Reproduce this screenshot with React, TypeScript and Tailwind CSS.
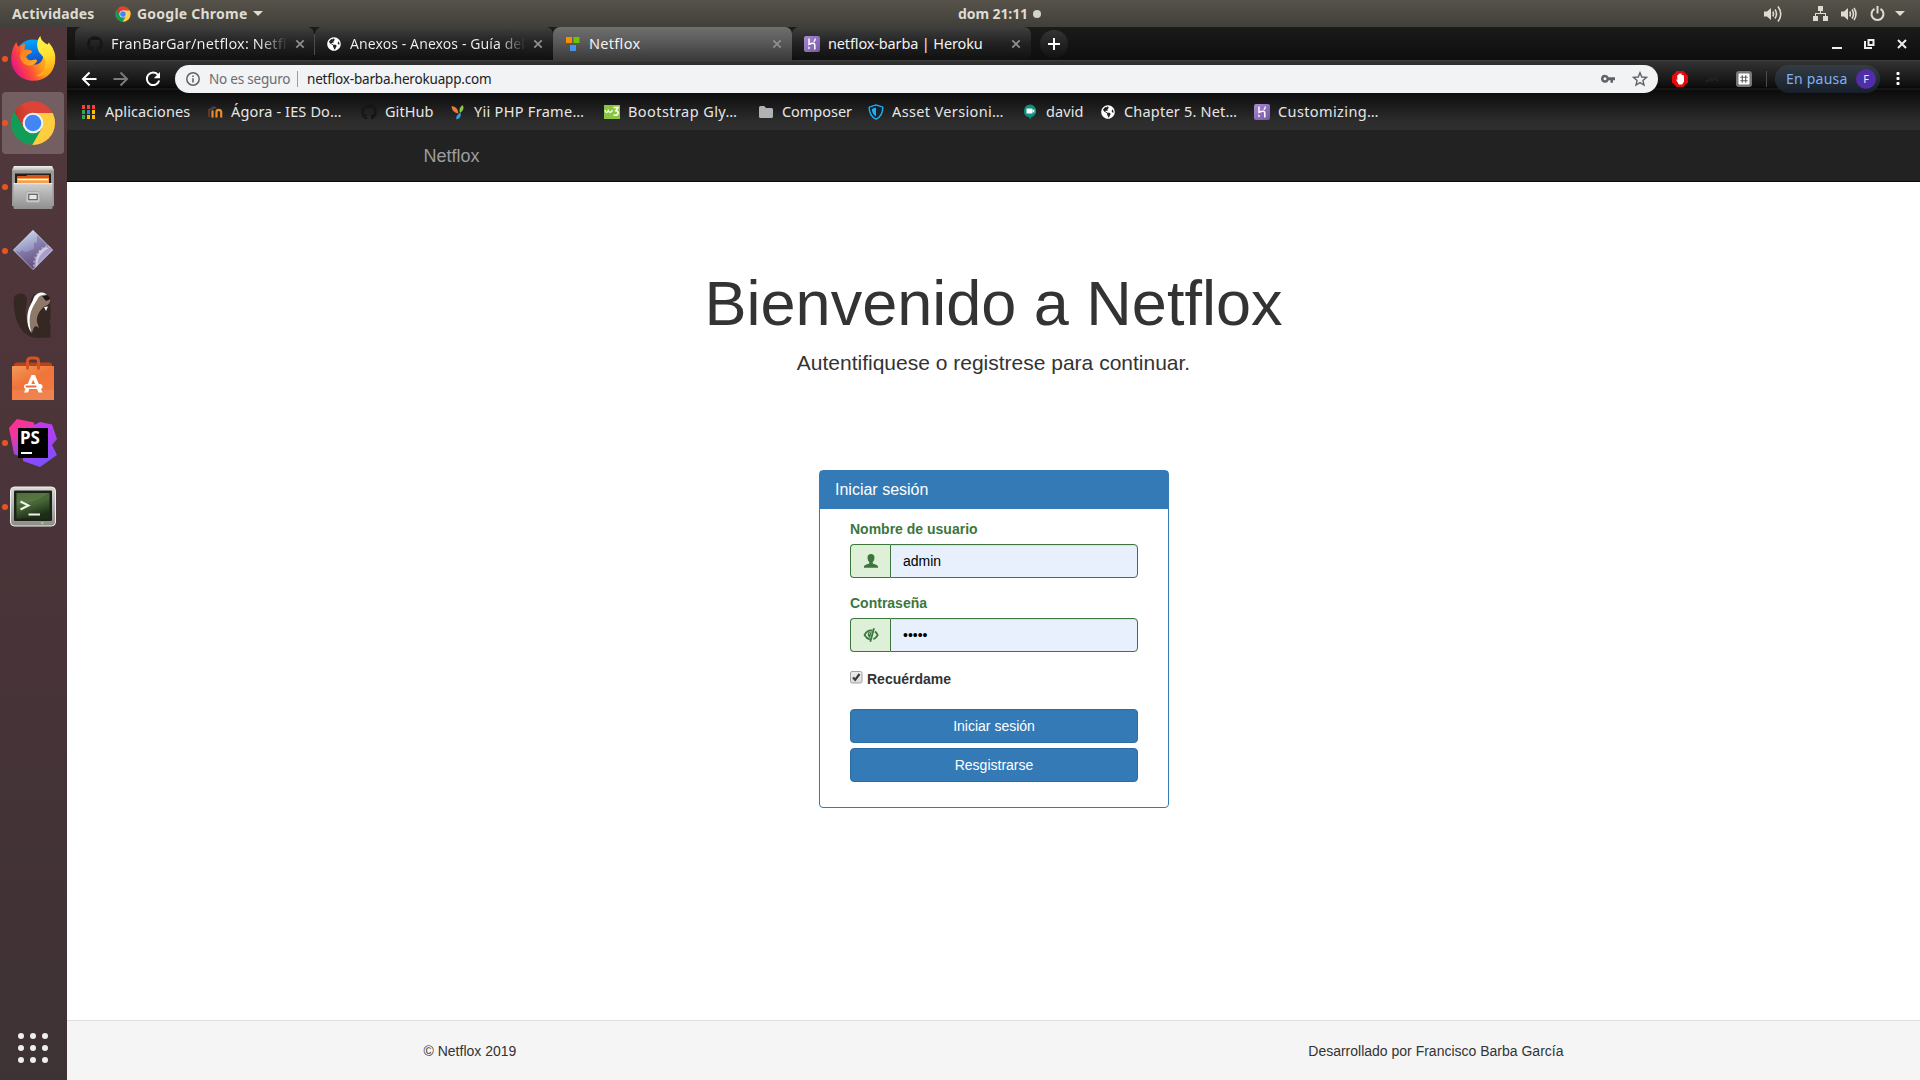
import React from "react";
import { FaGithub, FaGlobeAmericas } from "react-icons/fa";

const UI = "font-['Noto_Sans',sans-serif]";

function ChromeLogo({ size, id }: { size: number; id: string }) {
  return (
    <svg width={size} height={size} viewBox="0 0 48 48">
      <defs>
        <clipPath id={id}><circle cx="24" cy="24" r="23" /></clipPath>
        <linearGradient id={id + "s"} x1="0" y1="0" x2="1" y2="0">
          <stop offset="0" stopColor="#a52714" stopOpacity=".6" />
          <stop offset="1" stopColor="#db4437" stopOpacity="0" />
        </linearGradient>
      </defs>
      <g clipPath={`url(#${id})`}>
        <rect width="48" height="48" fill="#db4437" />
        <path d="M-2 6 L4.5 12 L15 29.5 L24 34.5 L33 29.5 L22 50 H-4 Z" fill="#0f9d58" />
        <path d="M24 13.5 H50 V50 H21.5 L33.5 29 L24 24 Z" fill="#ffcd40" />
        <path d="M4.5 12 L14 29 L14 20 Q17 14 24 13.5 L10 5Z" fill={`url(#${id}s)`} />
      </g>
      <circle cx="24" cy="24" r="10.8" fill="#f1f1f1" />
      <circle cx="24" cy="24" r="8.6" fill="#4285f4" />
    </svg>
  );
}

function Firefox() {
  return (
    <svg width="48" height="48" viewBox="0 0 48 48">
      <defs>
        <linearGradient id="ffBlue" x1=".4" y1="0" x2=".6" y2=".9">
          <stop offset="0" stopColor="#00a8f8" /><stop offset=".45" stopColor="#0a6fe6" /><stop offset="1" stopColor="#2a2a96" />
        </linearGradient>
        <linearGradient id="ffBody" x1=".9" y1=".2" x2=".05" y2=".6">
          <stop offset="0" stopColor="#ffcf2a" /><stop offset=".4" stopColor="#ff9a1c" /><stop offset=".7" stopColor="#ff4f35" /><stop offset="1" stopColor="#ea1a7c" />
        </linearGradient>
        <linearGradient id="ffTail" x1=".4" y1="0" x2=".6" y2="1">
          <stop offset="0" stopColor="#fff64f" /><stop offset=".5" stopColor="#ffe02e" /><stop offset="1" stopColor="#ff9a12" />
        </linearGradient>
        <linearGradient id="ffFace" x1="0" y1="0" x2="1" y2="1">
          <stop offset="0" stopColor="#ff6a20" /><stop offset="1" stopColor="#ffb31a" />
        </linearGradient>
      </defs>
      <circle cx="24" cy="22.500" r="18" fill="url(#ffBlue)" />
      <path d="M7.500 7 C7.600 9 8.600 11 10 12 C12 10 14 9 16 9 L15.500 15 C20 14.500 22 15 23 17 C21 19 17.500 19.500 17 22 C18 27 22 30 27 29.500 C31 29 35 25 34 19 L41 14 C45.500 17 46.800 22 45.800 28 C44 39 35 45.800 25 45.800 C13 45.800 3 38 2.200 25 C2 19 4 11 7.500 7 Z" fill="url(#ffBody)" />
      <path d="M31.500 1 C31.500 5 35 7.500 38.500 9.500 L40 7.500 C41 10 44 12 44.500 15 C47.500 21 46.500 29 43 34.500 C39 40 32 42 27 41 C34 38 37 33 36.500 27 C36.500 23 32 20 30 17 C27 11 28 4 31.500 1 Z" fill="url(#ffTail)" />
      <path d="M16 9 C13 12 14 14.500 15.500 15 C20 14.500 22 15 23 17 C21 19 17.500 19.500 17 22 C20 27 23 25 25.500 24.500 C28 24.500 29 26 27.500 27 C24 32 17 31 14 28 C9 22 10 14 16 9Z" fill="url(#ffFace)" />
    </svg>
  );
}

function Files() {
  return (
    <svg className="mt-[2px]" width="48" height="48" viewBox="0 0 48 48">
      <defs>
        <linearGradient id="fiG" x1="0" y1="0" x2="0" y2="1"><stop offset="0" stopColor="#cfcfcf" /><stop offset="1" stopColor="#8f8f8f" /></linearGradient>
        <linearGradient id="fiT" x1="0" y1="0" x2="0" y2="1"><stop offset="0" stopColor="#f2f2f2" /><stop offset="1" stopColor="#b5b5b5" /></linearGradient>
      </defs>
      <path d="M5 2 H43 L45 6 V42 H3 V6 Z" fill="#9a9a9a" />
      <path d="M5 2 H43 L45 6.500 H3 Z" fill="url(#fiT)" />
      <rect x="6" y="9.500" width="36" height="10" fill="#231f1d" />
      <path d="M8 12 H17 L18.500 11 H40 V19 H8Z" fill="#d5541c" />
      <rect x="8" y="14" width="32" height="5" fill="#f6a04c" />
      <rect x="9" y="15" width="30" height="1.200" fill="#fff" />
      <rect x="4.500" y="19" width="39" height="26" rx="1" fill="url(#fiG)" />
      <rect x="4.500" y="19" width="39" height="1.200" fill="#e8e8e8" />
      <rect x="17" y="27.500" width="14" height="11" rx="2" fill="#c9c9c9" stroke="#aaa" />
      <rect x="19.800" y="30.300" width="8.400" height="5.400" fill="#e6e6e6" stroke="#4f4f4f" />
    </svg>
  );
}

function Diamond() {
  return (
    <svg className="mb-[2px]" width="42" height="42" viewBox="0 0 42 42">
      <defs>
        <linearGradient id="diA" x1=".2" y1="0" x2=".6" y2="1"><stop offset="0" stopColor="#d4def0" /><stop offset=".45" stopColor="#9a9ac4" /><stop offset="1" stopColor="#64436f" /></linearGradient>
        <clipPath id="diC"><path d="M21 1 L41 21 L21 41 L1 21Z" /></clipPath>
      </defs>
      <path d="M21 1 L41 21 L21 41 L1 21Z" fill="url(#diA)" />
      <g clipPath="url(#diC)">
        <circle cx="43" cy="36" r="20" fill="#a99cc8" />
        <circle cx="43" cy="36" r="19" fill="none" stroke="#cfc9e2" strokeWidth="3" />
        <circle cx="43" cy="36" r="21" fill="none" stroke="#cfc9e2" strokeWidth="2" strokeDasharray="2 2" />
        <path d="M3 22 L8 23 L10 21 L13 23 L17 22 L22 20 L22 14 L25 13 L25 6 L41 21 L33 18 L27 22 L24 30 L24 39 L20 40Z" fill="#5d4a80" opacity=".35" />
      </g>
      <path d="M21 1.500 L40.500 21 L21 40.500 L1.500 21Z" fill="none" stroke="#d9def0" strokeOpacity=".5" />
    </svg>
  );
}

function Beaver() {
  return (
    <svg width="48" height="48" viewBox="0 0 48 48">
      <path d="M5 6 C8 1 17 1 18 8 C18 15 15 20 18 30 L40 28 C42 34 42 38 41 43 C42 44 42 46 41 46.500 L28 47 C18 47 10 38 7 27 C5 20 4 12 5 6Z" fill="#352722" />
      <path d="M22 12 C21 7 25 2 32 1.500 C37 1.500 42 5 41.500 10 C41 14 42 20 41.500 28 L36 34 L22 44 C17 34 18 22 22 12Z" fill="#352722" />
      <path d="M24 9 C27 5 31 3 35 4 L41 7 C42 11 40 14 36 15 C32 18 27 24 28 31 L30 37 C27 34 25 34 23 42 C18 34 19 22 22 16 Z" fill="#8d7869" />
      <path d="M24 9 C25 4 29 1.500 33 1.500 C35 1.500 37 2.500 38 4 C34 3.500 31 4 29 7 C28 10 25 13 23 18 C20 25 20 33 22.500 42 C16 33 18 20 21.500 14Z" fill="#fff" />
      <path d="M33 5 L39 5 L41.500 8 L37 10 Z" fill="#1d1512" />
      <path d="M35 16 L39 15.500 L37 20Z" fill="#fff" />
    </svg>
  );
}

function Software() {
  return (
    <svg width="48" height="48" viewBox="0 0 48 48">
      <defs><linearGradient id="soG" x1="0" y1="0" x2=".6" y2="1"><stop offset="0" stopColor="#f09a5c" /><stop offset=".5" stopColor="#f07439" /><stop offset="1" stopColor="#ee7b43" /></linearGradient></defs>
      <path d="M5 9 L7 7.500 H41 L43 9 V13 H5Z" fill="#b8431a" />
      <rect x="3" y="11" width="42" height="34" rx=".5" fill="url(#soG)" />
      <rect x="3" y="35" width="42" height="10" fill="#fff" opacity=".07" />
      <path d="M18.500 14.500 V6.500 Q18.500 3 22 3 H26 Q29.500 3 29.500 6.500 V14.500" fill="none" stroke="#d9531f" strokeWidth="3" />
      <path d="M22.500 20 H26 L33.500 37.500 H29.500 L24.200 24.500 L19 37.500 H15Z" fill="#fff" />
      <rect x="15" y="29" width="18.500" height="5" rx="2.500" fill="#fff" />
      <rect x="16.500" y="30.500" width="11" height="2" rx="1" fill="#ee7038" />
    </svg>
  );
}

function PhpStorm() {
  return (
    <div className="relative h-12 w-12">
      <svg width="48" height="48" viewBox="0 0 48 48">
        <defs>
          <linearGradient id="psA" x1="0" y1="0" x2=".5" y2="1"><stop offset="0" stopColor="#ff318c" /><stop offset=".4" stopColor="#f3359f" /><stop offset="1" stopColor="#8a4cf2" /></linearGradient>
          <linearGradient id="psB" x1=".5" y1="0" x2=".8" y2="1"><stop offset="0" stopColor="#c23af0" /><stop offset=".6" stopColor="#9a45f8" /><stop offset="1" stopColor="#6b57ff" /></linearGradient>
        </defs>
        <path d="M0 9 L8 0 L25 3.500 L28 22 L10 37 L5 35 Z" fill="url(#psA)" />
        <path d="M25 6 L31 3 L43 5.500 L48 20 L43 26 L48 36 L31 48 L14 42 L14 30 Z" fill="url(#psB)" />
        <rect x="9" y="9" width="30" height="30" fill="#000" />
        <rect x="12" y="33" width="11" height="2" fill="#fff" />
      </svg>
      <span className="absolute left-[11px] top-[9px] font-['Noto_Sans',sans-serif] text-[17px] font-bold leading-[20px] text-white">PS</span>
    </div>
  );
}

function Terminal() {
  return (
    <svg width="48" height="48" viewBox="0 0 48 48">
      <defs>
        <linearGradient id="teF" x1="0" y1="0" x2="0" y2="1"><stop offset="0" stopColor="#d8d8d4" /><stop offset="1" stopColor="#8d8d88" /></linearGradient>
        <linearGradient id="teS" x1="0" y1="0" x2=".4" y2="1"><stop offset="0" stopColor="#3b5a2c" /><stop offset=".5" stopColor="#4a6a38" /><stop offset="1" stopColor="#1c2e17" /></linearGradient>
      </defs>
      <rect x="1.500" y="4" width="45" height="39" rx="4" fill="url(#teF)" stroke="#efefef" />
      <rect x="5" y="7.500" width="38" height="30.500" rx="1" fill="#1c2218" />
      <rect x="7.500" y="10" width="33" height="25.500" fill="url(#teS)" />
      <path d="M7.500 22 Q25 20 40.500 10 V10 H7.500Z" fill="#7f9a60" opacity=".3" />
      <path d="M11.500 18.500 L19.500 22.500 L11.500 26.500" fill="none" stroke="#f0f5ea" strokeWidth="2" />
      <rect x="19.500" y="30.500" width="11.500" height="2" fill="#f0f5ea" />
      <rect x="32" y="39.300" width="2.500" height="1.800" fill="#8fe04a" />
    </svg>
  );
}

function Heroku({ id }: { id: string }) {
  return (
    <svg width="16" height="16" viewBox="0 0 16 16">
      <defs><linearGradient id={id} x1="0" y1="0" x2="1" y2="1"><stop offset="0" stopColor="#a98bd0" /><stop offset="1" stopColor="#7556a5" /></linearGradient></defs>
      <rect width="16" height="16" rx="2" fill={`url(#${id})`} />
      <path d="M5 2.500 V8.300 Q10.800 6 10.800 9 V13.500" fill="none" stroke="#fff" strokeWidth="1.500" />
      <path d="M4.300 10.200 L6.300 11.900 L4.300 13.600Z" fill="#fff" />
      <path d="M11.400 2.500 Q11.200 4.300 9.800 5.700" fill="none" stroke="#fff" strokeWidth="1.400" />
    </svg>
  );
}

const Globe = () => <div className="flex h-4 w-4 items-center justify-center"><FaGlobeAmericas size={14} color="#fff" /></div>;

const icons: Record<string, React.ReactNode> = {
  apps: (
    <svg width="16" height="16" viewBox="0 0 16 16">
      {["#f44336", "#f44336", "#f44336", "#34a853", "#1e88e5", "#fbbc05", "#34a853", "#fbbc05", "#fbbc05"].map((c, i) => (
        <rect key={i} x={1 + (i % 3) * 5} y={1 + Math.floor(i / 3) * 5} width="3" height="4" fill={c} />
      ))}
    </svg>
  ),
  moodle: (
    <svg width="16" height="16" viewBox="0 0 16 16">
      <path d="M0 6 L7 2 L10 4 L3 6.500Z" fill="#4b4140" />
      <path d="M5.500 13.500 V6.500 M9.500 13.500 V8 Q9.500 5.800 11.800 5.800 Q14.200 5.800 14.200 8.500 V13.500" fill="none" stroke="#ee8a2c" strokeWidth="2.200" />
      <path d="M2 5.500 V13" stroke="#7b4a2a" strokeWidth="1.200" />
    </svg>
  ),
  github: <FaGithub size={16} color="#161616" />,
  yii: (
    <svg width="16" height="16" viewBox="0 0 16 16">
      <path d="M1.500 2 Q8 2.500 8.500 9.500 Q2 9 1.500 2Z" fill="#f07a34" />
      <path d="M12.500 1 Q15.500 5 10 9 Q8.300 4 12.500 1Z" fill="#8ec641" />
      <path d="M10.500 8.500 Q12 14 6.500 15.500 Q5 12 10.500 8.500Z" fill="#3d9bd9" />
    </svg>
  ),
  w3: (
    <svg width="16" height="16" viewBox="0 0 16 16">
      <rect y="1" width="16" height="14" fill="#8bc53f" />
      <path d="M1 6 L1.500 7.500 Q3.200 9.500 4.200 6.500 Q5.500 9.500 7.500 7.500 L8.500 6" fill="none" stroke="#fff" strokeWidth="1.200" />
      <path d="M9.500 3.500 H14 L11.800 6.800 Q14.600 7 14 9.500 Q13 12.300 9.600 10.700" fill="none" stroke="#fff" strokeWidth="1.600" />
    </svg>
  ),
  folder: <svg width="16" height="16" viewBox="0 0 16 16"><path d="M1 3.500 Q1 2 2.500 2 H6.200 L8 4 H13.500 Q15 4 15 5.500 V12.500 Q15 14 13.500 14 H2.500 Q1 14 1 12.500Z" fill="#b0b2b5" /></svg>,
  shield: (
    <svg width="16" height="16" viewBox="0 0 16 16">
      <path d="M8 .9 L14.800 3.200 Q15 11.500 8 15.200 Q1 11.500 1.200 3.200Z" fill="#17222c" stroke="#1fb0f8" strokeWidth="1.400" />
      <path d="M8 3.500 V12.500 Q3.800 9.500 3.800 5Z" fill="#1fb0f8" />
    </svg>
  ),
  hangouts: (
    <svg width="16" height="16" viewBox="0 0 16 16">
      <path d="M8.200 .6 A6.400 6.400 0 0 1 8.900 13.300 V15.600 L6.500 13.100 A6.400 6.400 0 0 1 8.200 .6Z" fill="#0f8f7e" />
      <rect x="4.500" y="4.600" width="6" height="5" rx=".6" fill="#fff" /><path d="M10 7.100 L12.300 5.100 V9.100Z" fill="#fff" />
    </svg>
  ),
  globe: <Globe />,
  heroku: <Heroku id="heBar" />,
};

const bookmarks = [
  { icon: "apps", t: "Aplicaciones", w: "w-[126px]", c: "tracking-[0.08px]" },
  { icon: "moodle", t: "Ágora - IES Do…", w: "w-[154px]", c: "tracking-[0.14px]" },
  { icon: "github", t: "GitHub", w: "w-[89px]", c: "tracking-[0.05px]" },
  { icon: "yii", t: "Yii PHP Frame…", w: "w-[154px]", c: "tracking-[0.29px]" },
  { icon: "w3", t: "Bootstrap Gly…", w: "w-[154px]", c: "tracking-[0.43px]" },
  { icon: "folder", t: "Composer", w: "w-[110px]", c: "tracking-[-0.04px]" },
  { icon: "shield", t: "Asset Versioni…", w: "w-[154px]", c: "tracking-[0.36px]" },
  { icon: "hangouts", t: "david", w: "w-[78px]", c: "tracking-[0.08px]" },
  { icon: "globe", t: "Chapter 5. Net…", w: "w-[154px]", c: "tracking-[0.2px]" },
  { icon: "heroku", t: "Customizing…", w: "w-[154px]", c: "tracking-[0.39px]" },
];

function CloseX() {
  return <svg width="10" height="10" viewBox="0 0 10 10" className="shrink-0"><path d="M1.300 1.300 L8.700 8.700 M8.700 1.300 L1.300 8.700" stroke="#8f8f8f" strokeWidth="1.700" /></svg>;
}

function Volume({ wide }: { wide?: boolean }) {
  return (
    <svg width="18" height="18" viewBox="0 0 18 18" fill="none" stroke="#dfdbd2" strokeWidth="1.600">
      <path d="M0 6.500 H3 L7 3 V15 L3 11.500 H0Z" fill="#dfdbd2" stroke="none" />
      <path d="M8.800 6.500 Q10.300 9 8.800 11.500" />
      <path d="M11 4.500 Q14 9 11 13.500" />
      <path d={wide ? "M14 1.500 Q19.500 9 14 16.500" : "M13 3 Q17 9 13 15"} />
    </svg>
  );
}

function Tri() {
  return <svg width="10" height="6" viewBox="0 0 10 6"><path d="M0 0 H10 L5 5Z" fill="#dfdbd2" /></svg>;
}

function TopBar() {
  return (
    <div className={`flex h-[27px] shrink-0 items-center bg-gradient-to-b from-[#57534b] to-[#403f39] text-[14px] font-bold leading-[26px] text-[#dfdbd2] ${UI}`}>
      <span className="ml-[12px] w-[103px] whitespace-pre tracking-[0.15px]">Actividades</span>
      <ChromeLogo size={16} id="ctop" />
      <span className="ml-[6px] w-[116px] whitespace-pre tracking-[0.23px]">Google Chrome</span>
      <Tri />
      <span className="ml-[695px] w-[75px] whitespace-pre tracking-[-0.1px]">dom 21:11</span>
      <span className="h-2 w-2 rounded-full bg-[#d6d3cc]" />
      <div className="ml-[723px]"><Volume wide /></div>
      <svg className="ml-[31px]" width="15" height="16" viewBox="0 0 15 16" fill="#dfdbd2">
        <rect x="5" y="0" width="5" height="5" /><rect x="0" y="10" width="5" height="5" /><rect x="10" y="10" width="5" height="5" />
        <path d="M7 5 H8 V7 H13 V10 H12 V8 H3 V10 H2 V7 H7Z" />
      </svg>
      <div className="ml-[13px]"><Volume /></div>
      <svg className="ml-[11px]" width="15" height="16" viewBox="0 0 15 16" fill="none" stroke="#dfdbd2" strokeWidth="2">
        <path d="M4.500 2.800 A6 6 0 1 0 10.500 2.800" /><path d="M7.500 0 V7.500" />
      </svg>
      <div className="ml-[10px]"><Tri /></div>
    </div>
  );
}

const tabBg = "bg-gradient-to-b from-[#3f3f3f] via-[#222222] to-[#101010]";

function Chrome() {
  return (
    <div className={`shrink-0 ${UI}`}>
      <div className="flex h-[33px] items-start bg-gradient-to-b from-[#1b1b1b] to-[#0e0e0e] pl-[8px] text-[14.5px] leading-[22px] text-[#f2f2f2]">
        <div className={`flex h-[33px] w-[239px] items-center rounded-t-[7px] rounded-b-[5px] pl-[12px] pr-[10px] ${tabBg}`}>
          <FaGithub className="shrink-0" size={16} color="#161616" />
          <span className="ml-[8px] w-[184px] shrink-0 pb-px"><span className="whitespace-pre bg-gradient-to-r from-[#f2f2f2] from-85% to-[#2c2c2c] bg-clip-text tracking-[0.15px] text-transparent">FranBarGar/netflox: Netfl</span></span>
          <CloseX />
        </div>
        <div className="mt-[7px] h-[21px] w-px bg-[#4c4c4c]" />
        <div className={`flex h-[33px] w-[238px] items-center rounded-t-[7px] rounded-b-[5px] pl-[11px] pr-[10px] ${tabBg}`}>
          <Globe />
          <span className="ml-[8px] w-[183px] shrink-0 pb-px"><span className="whitespace-pre bg-gradient-to-r from-[#f2f2f2] from-85% to-[#2c2c2c] bg-clip-text text-[14px] tracking-[0.09px] text-transparent">Anexos - Anexos - Guía del</span></span>
          <CloseX />
        </div>
        <div className="flex h-[33px] w-[239px] items-center rounded-t-[7px] bg-gradient-to-b from-[#6f6f6f] from-0% via-[#575757] via-50% to-[#3a3a3a] to-100% pl-[12px] pr-[10px]">
          <svg width="16" height="16" viewBox="0 0 16 16"><rect x="1" y="1" width="6" height="6" fill="#ff8b00" /><rect x="8.500" y="1" width="6" height="6" fill="#6cc404" /><rect x="5" y="9" width="6" height="6" fill="#4693ee" /></svg>
          <span className="ml-[8px] grow whitespace-pre pb-px tracking-[0.3px]">Netflox</span>
          <CloseX />
        </div>
        <div className={`flex h-[33px] w-[239px] items-center rounded-t-[7px] rounded-b-[5px] pl-[12px] pr-[10px] ${tabBg}`}>
          <Heroku id="heTab" />
          <span className="ml-[8px] grow whitespace-pre pb-px tracking-[-0.14px]">netflox-barba | Heroku</span>
          <CloseX />
        </div>
        <div className="ml-[9px] mt-[3px] flex h-[28px] w-[28px] items-center justify-center rounded-full bg-gradient-to-b from-[#343434] to-[#121212]">
          <svg width="12" height="12" viewBox="0 0 12 12"><path d="M6 0 V12 M0 6 H12" stroke="#fff" strokeWidth="2" /></svg>
        </div>
        <div className="ml-auto mr-[12px] flex h-[33px] items-center">
          <svg width="76" height="12" viewBox="0 0 76 12">
            <rect x="0" y="9" width="10" height="2" fill="#eee" />
            <path d="M35.500 1 H42.500 V8 H35.500Z M37.500 3 V6 H40.500 V3Z" fill="#eee" fillRule="evenodd" />
            <path d="M32 3 H34 V9 H40 V11 H32Z" fill="#eee" />
            <path d="M66 2 L74 10 M74 2 L66 10" stroke="#eee" strokeWidth="2" />
          </svg>
        </div>
      </div>
      <div className="bg-[linear-gradient(to_bottom,#4a4a4a_0,#333333_1px,#0d0d0d_27px,#050505_28px,#242424_29px,#0b0b0b_30px,#151515_40px,#2d2d2d_62px,#2e2e2e_70px)]">
        <div className="flex h-[38px] items-center pl-[14px]">
          <svg width="16" height="16" viewBox="0 0 16 16" fill="none" stroke="#fff" strokeWidth="2"><path d="M15.500 8 H2.500 M8.500 1.500 L2 8 L8.500 14.500" /></svg>
          <svg className="ml-[16px]" width="16" height="16" viewBox="0 0 16 16" fill="none" stroke="#7b7b7b" strokeWidth="2"><path d="M.5 8 H13.500 M7.500 1.500 L14 8 L7.500 14.500" /></svg>
          <svg className="ml-[16px]" width="16" height="16" viewBox="0 0 16 16" fill="none" stroke="#fff" strokeWidth="2"><path d="M13.200 4 A6.300 6.300 0 1 0 14.200 9.500" /><path d="M15 1 V7.200 H8.800Z" fill="#fff" stroke="none" /></svg>
          <div className="ml-[14px] flex h-[28px] w-[1483px] items-center rounded-full bg-[#f1f3f4] pl-[11px] text-[13.5px] leading-[28px]">
            <svg width="14" height="14" viewBox="0 0 14 14" fill="none" stroke="#5f6368"><circle cx="7" cy="7" r="6.200" strokeWidth="1.500" /><path d="M7 6.200 V10.500 M7 3.400 V5" strokeWidth="1.600" /></svg>
            <span className="ml-[9px] w-[88px] whitespace-pre tracking-[-0.2px] text-[#696d72]">No es seguro</span>
            <span className="h-4 w-px bg-[#9b9ea2]" />
            <span className="ml-[9px] grow whitespace-pre tracking-[-0.18px] text-[#202124]">netflox-barba.herokuapp.com</span>
            <svg width="14" height="10" viewBox="0 0 14 10"><path d="M4 .8 A4 4 0 1 0 7.700 6.300 H9.500 V8.800 H12 V6.300 H14 V3.300 H7.700 A4 4 0 0 0 4 .8Z M4 3.300 A1.500 1.500 0 1 1 4 6.300 A1.500 1.500 0 1 1 4 3.300Z" fill="#5f6368" fillRule="evenodd" /></svg>
            <svg className="ml-[17px] mr-[10px]" width="16" height="16" viewBox="0 0 24 24" fill="none" stroke="#5f6368" strokeWidth="2.100"><path d="M12 2.500 L14.700 9 L21.800 9.600 L16.400 14.300 L18 21.200 L12 17.500 L6 21.200 L7.600 14.300 L2.200 9.600 L9.300 9Z" /></svg>
          </div>
          <svg className="ml-[14px]" width="16" height="16" viewBox="0 0 16 16">
            <path d="M4.700 0 H11.300 L16 4.700 V11.300 L11.300 16 H4.700 L0 11.300 V4.700Z" fill="#e30b0b" />
            <path d="M3.800 8.300 L5.300 9.300 V4 H6.500 V2.800 H8.200 V2.500 H9.600 V4 H11.200 L12 5 V10.500 L10.200 13.500 H6.800Z" fill="#fff" />
          </svg>
          <svg className="ml-[16px]" width="16" height="16" viewBox="0 0 16 16"><path d="M1 11 L6 6 L8 8 L10.500 5 L15 10 H12.500 L10.500 8 L8 11 L6 9 L4 11Z" fill="#222" /></svg>
          <svg className="ml-[16px]" width="16" height="16" viewBox="0 0 16 16">
            <rect width="16" height="16" rx="3" fill="#77787a" /><rect x="2.500" y="2.500" width="11" height="11" rx="1" fill="#fff" />
            <path d="M6.300 4.300 V11.700 M9.700 4.300 V11.700 M4.300 6.300 H11.700 M4.300 9.700 H11.700" stroke="#5b5c5e" strokeWidth="1.100" />
          </svg>
          <span className="ml-[14px] h-4 w-px bg-[#4b4b4b]" />
          <div className="ml-[8px] flex h-[28px] w-[105px] items-center rounded-full bg-gradient-to-b from-[#343c45] to-[#17202a] pl-[11px] text-[14px] text-[#83b0f5]">
            <span className="w-[70px] whitespace-pre pb-px tracking-[0.22px]">En pausa</span>
            <span className="flex h-5 w-5 items-center justify-center rounded-full bg-[#512da8] text-[11px] text-[#ebe4f7]">F</span>
          </div>
          <svg className="ml-[16px]" width="4" height="14" viewBox="0 0 4 14" fill="#fff"><rect x=".5" y="0" width="3" height="3" rx=".8" /><rect x=".5" y="5" width="3" height="3" rx=".8" /><rect x=".5" y="10" width="3" height="3" rx=".8" /></svg>
        </div>
        <div className="flex h-[32px] items-center pb-[4px] pl-[14px] text-[14.5px] leading-[20px] text-[#e6e6e6]">
          {bookmarks.map((b) => (
            <div key={b.t} className={`flex shrink-0 items-center ${b.w}`}>
              <span className="mr-[8px] shrink-0">{icons[b.icon]}</span>
              <span className={`whitespace-pre pb-[2px] ${b.c}`}>{b.t}</span>
            </div>
          ))}
        </div>
      </div>
    </div>
  );
}

const dock = [
  { el: <Firefox />, dot: true },
  { el: <ChromeLogo size={46} id="cdock" />, dot: true, on: true },
  { el: <Files />, dot: true },
  { el: <Diamond />, dot: true },
  { el: <Beaver />, dot: false },
  { el: <Software />, dot: false },
  { el: <PhpStorm />, dot: true },
  { el: <Terminal />, dot: true },
];

function Dock() {
  return (
    <div className="flex w-[67px] shrink-0 flex-col bg-gradient-to-b from-[#52383c] via-[#4a3439] to-[#3d3234]">
      {dock.map((d, i) => (
        <div key={i} className="flex h-[64px] items-center pl-[2px]">
          <div className={`flex h-[62px] w-[62px] items-center rounded-[4px] ${d.on ? "bg-white/20" : ""}`}>
            <span className={`h-[5.5px] w-[5.5px] rounded-full ${d.dot ? "bg-[#e95420]" : ""}`} />
            <div className="flex w-[51px] items-center justify-center">{d.el}</div>
          </div>
        </div>
      ))}
      <div className="mt-auto mb-[17px] ml-[18px] grid w-[30px] grid-cols-3 gap-[6px]">
        {Array.from({ length: 9 }, (_, i) => <span key={i} className="h-[6px] w-[6px] rounded-full bg-[#f0efee]" />)}
      </div>
    </div>
  );
}

function Field({ label, icon, value }: { label: string; icon: React.ReactNode; value: string }) {
  return (
    <div className="mb-[15px]">
      <div className="mb-[5px] font-bold text-[#3c763d]">{label}</div>
      <div className="flex h-[34px]">
        <div className="flex w-[40px] items-center justify-center rounded-l-[4px] border border-r-0 border-[#3c763d] bg-[#dff0d8]">{icon}</div>
        <div className="grow rounded-r-[4px] border border-[#3c763d] bg-[#e8f0fe] px-[12px] py-[6px] text-black shadow-[inset_0_1px_1px_rgba(0,0,0,0.075)]">{value}</div>
      </div>
    </div>
  );
}

function Page() {
  return (
    <div className="flex grow flex-col bg-white font-['Liberation_Sans',Arial,sans-serif] text-[14px] leading-[20px] text-[#333333]">
      <div className="h-[52px] shrink-0 border-b border-[#080808] bg-[#222222]">
        <div className="mx-auto w-[1140px] pt-[16px] text-[18px] text-[#9d9d9d]">Netflox</div>
      </div>
      <div className="flex grow flex-col items-center pt-[87px]">
        <h1 className="mb-[10px] text-[63px] font-medium leading-[69px]">Bienvenido a Netflox</h1>
        <p className="text-[21px] leading-[29px]">Autentifiquese o registrese para continuar.</p>
        <div className="mt-[93px] ml-px h-[338px] w-[350px] rounded-[4px] border border-[#337ab7] bg-white">
          <div className="h-[38px] bg-[#337ab7] px-[15px] pt-[10px] text-[16px] leading-[18px] text-white">Iniciar sesión</div>
          <div className="px-[30px] pt-[10px]">
            <Field label="Nombre de usuario" value="admin" icon={
              <svg width="14" height="14" viewBox="0 0 14 14"><path d="M7 0 C9.300 0 10.600 1.500 10.500 3.800 C10.400 5.600 9.800 7 8.700 8 V9.300 C10 10.500 13.500 10.600 14 12.500 V13.700 H0 V12.500 C.5 10.600 4 10.500 5.300 9.300 V8 C4.200 7 3.600 5.600 3.500 3.800 C3.400 1.500 4.700 0 7 0Z" fill="#3c763d" /></svg>
            } />
            <Field label="Contraseña" value="•••••" icon={
              <svg width="16" height="14" viewBox="0 0 16 14" fill="none" stroke="#3c763d">
                <path d="M9.500 2.500 Q4.500 1.500 1.500 7 Q3.500 10.500 6.800 11.300" strokeWidth="1.700" />
                <path d="M11 .3 L7.300 13.700" strokeWidth="1.800" />
                <path d="M12 3.500 Q13.800 5 14.700 7 Q13.200 10 10.300 11.200" strokeWidth="1.700" />
                <path d="M8.800 3.500 L7 10 Q4.300 8.500 4.800 5 Q6 3.200 8.800 3.500Z" fill="#3c763d" stroke="none" /><path d="M6.300 6.200 Q6.300 5 7.500 4.800" stroke="#dff0d8" strokeWidth=".9" />
              </svg>
            } />
            <div className="mt-[17px] flex h-[20px]">
              <svg className="mt-[2px]" width="13" height="13" viewBox="0 0 13 13">
                <defs><linearGradient id="cbG" x1="0" y1="0" x2="0" y2="1"><stop offset="0" stopColor="#ededed" /><stop offset="1" stopColor="#dcdcdc" /></linearGradient></defs>
                <rect x=".5" y=".5" width="11.500" height="11.500" rx="1.500" fill="url(#cbG)" stroke="#a3a3a3" />
                <path d="M3 6.500 L5.200 8.800 L9.500 3" fill="none" stroke="#3b3b3b" strokeWidth="2.200" />
              </svg>
              <span className="ml-[4px] font-bold">Recuérdame</span>
            </div>
            <div className="mt-[20px] flex flex-col gap-[5px]">
              <button className="h-[34px] rounded-[4px] border border-[#2e6da4] bg-[#337ab7] text-white">Iniciar sesión</button>
              <button className="h-[34px] rounded-[4px] border border-[#2e6da4] bg-[#337ab7] text-white">Resgistrarse</button>
            </div>
          </div>
        </div>
      </div>
      <div className="h-[60px] shrink-0 border-t border-[#dddddd] bg-[#f5f5f5] pt-[20px]">
        <div className="mx-auto flex w-[1140px] justify-between"><span>© Netflox 2019</span><span>Desarrollado por Francisco Barba García</span></div>
      </div>
    </div>
  );
}

export default function App() {
  return (
    <div className="flex h-[1080px] w-[1920px] flex-col overflow-hidden">
      <TopBar />
      <div className="flex min-h-0 grow">
        <Dock />
        <div className="flex grow flex-col">
          <Chrome />
          <Page />
        </div>
      </div>
    </div>
  );
}
